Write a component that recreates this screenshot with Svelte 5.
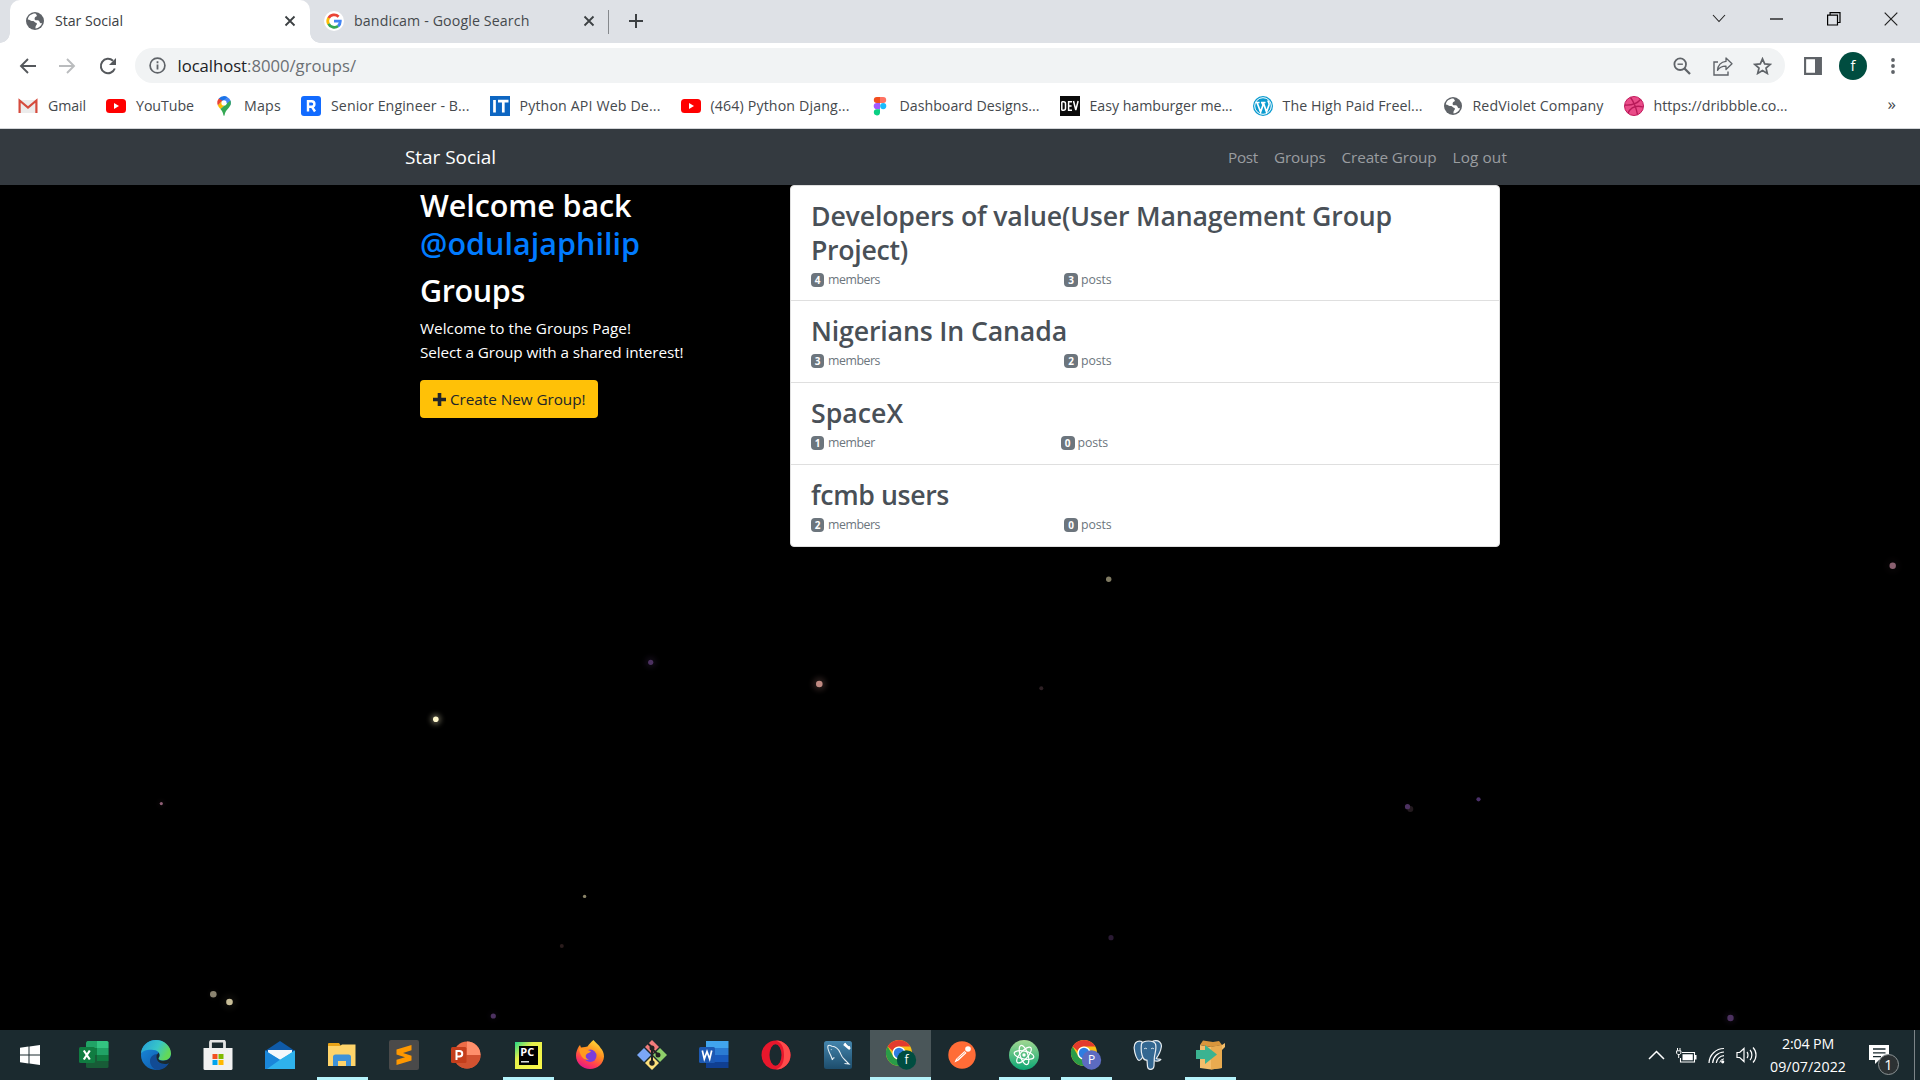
<script>
  // Spreads letter spacing so that a label fills its allotted width.
  function fit(node, width) {
    node.style.letterSpacing = '0px';
    const natural = node.getBoundingClientRect().width;
    const count = node.textContent.length;
    node.style.letterSpacing = `${(width - natural) / count}px`;
  }

  const svg = (w, h, vb, body) =>
    `<svg width="${w}" height="${h}" viewBox="${vb}" fill="none" style="display:block">${body}</svg>`;

  const globe = `<circle cx="10" cy="10" r="9" fill="#5f6368"/><path d="M10.5 2.6C7 2.4 3.6 4.6 2.8 8.4c2 .2 3.4 1.600 5.300 1.600 1.300 0 1.300 1.500 2.700 1.700 1.300.2 1.500 1.400.6 2.300-.8.8-1 1.900-.9 3.400 3-.2 5.700-2.400 6.600-5.200-1.200.3-2.200-.2-2.500-1.300-.4-1.400-1.600-1.600-3-1.600-1.700 0-2.300-1-1.900-2.400.3-1.100 1.600-.8 2.100-1.800.4-.9-.8-1.300-1.300-2.500z" fill="#fff"/>`;
  const youtube = `<rect y="3" width="20" height="14" rx="3.500" fill="#f00"/><path d="M8 7l5 3-5 3z" fill="#fff"/>`;
  const chrome = `<circle cx="14" cy="14" r="13" fill="#fbc116"/><path d="M2.700 7.500A13 13 0 0 1 25.300 7.500H14a6.500 6.500 0 0 0-6.200 4.500z" fill="#e33b2e"/><path d="M2.700 7.500A13 13 0 0 0 14 27l5.600-9.700a6.500 6.500 0 0 1-11.300 0z" fill="#2a9c48"/><circle cx="14" cy="14" r="6.600" fill="#fff"/><circle cx="14" cy="14" r="5.200" fill="#2f7de1"/>`;
  const letterBadge = (fill, ch) =>
    `<circle cx="21.500" cy="21" r="9.700" fill="${fill}"/><text x="21.500" y="25.300" font-family="Open Sans, sans-serif" font-size="12" fill="#fff" text-anchor="middle">${ch}</text>`;

  const icons = {
    globe: svg(20, 20, '0 0 20 20', globe),
    google: svg(20, 20, '0 0 20 20', `<circle cx="10" cy="10" r="10" fill="#fff"/><g stroke-width="2.800"><path d="M4.600 7.200A6.300 6.300 0 0 1 14.600 5.700" stroke="#ea4335"/><path d="M4.600 6.900a6.300 6.300 0 0 0 0 6.200" stroke="#fbbc05"/><path d="M4.600 12.800a6.300 6.300 0 0 0 9.600 2.200" stroke="#34a853"/><path d="M10 10.200h6.300c0 2-.7 3.700-2.200 4.900" stroke="#4285f4"/></g>`),
    close: svg(12, 12, '0 0 12 12', `<path d="M1.500 1.500l9 9m0-9l-9 9" stroke="#3c4043" stroke-width="1.800"/>`),
    plus: svg(14, 14, '0 0 14 14', `<path d="M7 0v14M0 7h14" stroke="#3c4043" stroke-width="2"/>`),
    chevron: svg(14, 9, '0 0 14 9', `<path d="M1 1l6 6.500L13 1" stroke="#222" stroke-width="1.100"/>`),
    minimize: svg(13, 2, '0 0 13 2', `<path d="M0 1h13" stroke="#000" stroke-width="1.200"/>`),
    restore: svg(14, 14, '0 0 14 14', `<path d="M.6 3.100h9.900v9.900H.6zM3.100 3V.6h9.900v9.900h-2.400" stroke="#000" stroke-width="1.200"/>`),
    winclose: svg(14, 14, '0 0 14 14', `<path d="M.7.7l12.600 12.600m0-12.600L.7 13.300" stroke="#222" stroke-width="1.200"/>`),
    back: svg(18, 18, '0 0 18 18', `<path d="M17 9H2m7-7L2 9l7 7" stroke="#55585c" stroke-width="1.900"/>`),
    forward: svg(18, 18, '0 0 18 18', `<path d="M1 9h15M9 2l7 7-7 7" stroke="#babcbe" stroke-width="1.900"/>`),
    reload: svg(20, 20, '0 0 20 20', `<path d="M16.800 12.500A7.200 7.200 0 1 1 15 4.800" stroke="#55585c" stroke-width="2"/><path d="M18 2v7h-7z" fill="#55585c"/>`),
    info: svg(17, 17, '0 0 17 17', `<circle cx="8.500" cy="8.500" r="7.400" stroke="#5f6368" stroke-width="1.700"/><path d="M8.500 7.600v5M8.500 4.300v1.900" stroke="#5f6368" stroke-width="1.800"/>`),
    zoom: svg(18, 18, '0 0 18 18', `<circle cx="7.200" cy="7.200" r="5.800" stroke="#5f6368" stroke-width="1.800"/><path d="M11.500 11.500l5.500 5.500" stroke="#5f6368" stroke-width="2.300"/><path d="M4.500 7.200h5.400" stroke="#5f6368" stroke-width="1.400"/>`),
    share: svg(20, 20, '0 0 20 20', `<path d="M5 6H1v13h14v-3.500" stroke="#5f6368" stroke-width="1.400"/><path d="M13 2l6 5.800-6 5.700V10.200c-4-.1-6.500 1-8.500 4.200.4-4.700 3.300-8.400 8.500-9z" stroke="#5f6368" stroke-width="1.300" stroke-linejoin="round"/>`),
    star: svg(19, 18, '0 0 19 18', `<path d="M9.500 1.800l2.200 5.100 5.500.5-4.200 3.600 1.300 5.400-4.800-2.900-4.800 2.900L6 11 1.800 7.400l5.500-.5z" stroke="#5f6368" stroke-width="1.700"/>`),
    panel: svg(18, 18, '0 0 18 18', `<path d="M1.100 1.100h15.800v15.800H1.100z" stroke="#5f6368" stroke-width="2.100"/><path d="M11 1h6v16h-6z" fill="#5f6368"/>`),
    kebab: svg(4, 16, '0 0 4 16', `<g fill="#5f6368"><circle cx="2" cy="2" r="1.900"/><circle cx="2" cy="8" r="1.900"/><circle cx="2" cy="14" r="1.900"/></g>`),
    gmail: svg(20, 20, '0 0 20 20', `<path d="M1 4h18v13H1z" fill="#ececec"/><path d="M1.600 17V4.500L10 11.500l8.400-7V17" stroke="#d54b3d" stroke-width="2.200"/>`),
    youtube: svg(20, 20, '0 0 20 20', youtube),
    maps: svg(20, 20, '0 0 20 20', `<path d="M10 0a6.700 6.700 0 0 0-5.200 2.500L8 7l5.600-5.800A7 7 0 0 0 10 0z" fill="#1a73e8"/><path d="M13.500 1.200a6.700 6.700 0 0 1 2.800 8L8.300 4.900z" fill="#4285f4"/><path d="M4.800 2.500a6.800 6.800 0 0 0-.9 7l4.600-4.700z" fill="#ea4335"/><path d="M3.900 9.500c.5 1.200 1.400 2.300 2.500 3.500L12 8.500 8 5z" fill="#fbbc04"/><path d="M6.400 13c1.900 2.200 2.600 4 3 5.900.2 1.200 1 1.200 1.200 0 1-5 4.300-5.900 5.900-9.900.5-1.700.4-3.200-.1-4.500z" fill="#34a853"/><circle cx="10" cy="6.900" r="2.600" fill="#fff"/>`),
    r: svg(20, 20, '0 0 20 20', `<rect width="20" height="20" rx="3" fill="#126bff"/><path d="M7 15.500V5.200h3.600a2.800 2.800 0 0 1 0 5.600H8m3 0l3 4.700" stroke="#fff" stroke-width="2.400"/>`),
    it: svg(20, 20, '0 0 20 20', `<path d="M0 0h20v20H0z" fill="#0d66c2"/><path d="M4.500 4v12.500M8 5.200h10.500M13.300 5v11.500" stroke="#fff" stroke-width="2.700"/>`),
    figma: svg(20, 20, '0 0 20 20', `<path d="M10 1H6.800a3 3 0 0 0 0 6H10z" fill="#f24e1e"/><path d="M10 1h3.200a3 3 0 0 1 0 6H10z" fill="#ff7262"/><path d="M10 7H6.800a3 3 0 0 0 0 6.200H10z" fill="#a259ff"/><circle cx="13.200" cy="10.100" r="3.100" fill="#1abcfe"/><path d="M10 13.200H6.800a3.100 3.100 0 1 0 3.200 3.200z" fill="#0acf83"/>`),
    dev: svg(20, 20, '0 0 20 20', `<path d="M0 0h20v20H0z" fill="#0a0a0a"/><path d="M1.800 5.500v9M2 5.700h1.500q2 0 2 2v4.600q0 2-2 2H2M12 5.700H8.600v8.600H12M8.600 10h3M13.500 5l2.300 9 2.300-9" stroke="#fff" stroke-width="1.500"/>`),
    wp: svg(20, 20, '0 0 20 20', `<circle cx="10" cy="10" r="10" fill="#0a9bd0"/><circle cx="10" cy="10" r="8.300" stroke="#fff" stroke-width="1"/><path d="M2.600 6.500h4M8 6.500h4.500M4 6.500l3.600 9.500L10 9 8.900 6.500M10.300 6.500l3.200 9.500 2.500-7c.6-2-.5-3-1.200-4.500" stroke="#fff" stroke-width="1.700"/>`),
    dribbble: svg(20, 20, '0 0 20 20', `<circle cx="10" cy="10" r="9.500" fill="#ea4c89" stroke="#c2185b"/><path d="M6.500 1.500C10 6 12 11 13.500 18.500M1 9c7 .3 12-1 15.500-5.500M4 17c3-6 8-8 15-6" stroke="#b71a58" stroke-width="1.300"/>`),
    fa: svg(13, 13, '0 0 13 13', `<path d="M4.700 0h3.600v4.700H13v3.600H8.300V13H4.700V8.300H0V4.700h4.700z" fill="#212529"/>`),

    windows: svg(20, 20, '0 0 20 20', `<path d="M0 2.800l8.500-1.200v8H0zM9.500 1.500L20 0v9.600H9.500zM0 10.500h8.500v8L0 17.300zM9.500 10.500H20V20L9.500 18.600z" fill="#fff"/>`),
    excel: svg(30, 28, '0 0 30 28', `<rect x="7" y="0" width="22.500" height="27" rx="1.500" fill="#185c37"/><path d="M8.500 0H18v7H7V1.500z" fill="#21a366"/><path d="M18 0h10q1.500 0 1.500 1.500V7H18z" fill="#33c481"/><path d="M7 7h11v7H7z" fill="#107c41"/><path d="M18 7h11.500v7H18z" fill="#21a366"/><path d="M18 14h11.500v6H18z" fill="#107c41"/><rect x="0" y="6" width="16" height="16" rx="1.500" fill="#107c41"/><path d="M4.800 9.500l6 9m0-9l-6 9" stroke="#fff" stroke-width="2.200"/>`),
    edge: svg(30, 30, '0 0 30 30', `<defs><linearGradient id="e1" x1="0" y1="0" x2="1" y2="0.400"><stop stop-color="#249bd9"/><stop offset=".6" stop-color="#37c6c8"/><stop offset="1" stop-color="#63d957"/></linearGradient><linearGradient id="e2" x1="0" y1="0" x2="1" y2="1"><stop stop-color="#1a8ee0"/><stop offset="1" stop-color="#0c4fa0"/></linearGradient></defs><circle cx="15" cy="15" r="15" fill="url(#e2)"/><path d="M0 14C0 6 7 0 15 0s15 6 15 13.500c0 4.500-3.500 7-7.500 7-4 0-6-1.500-4.700-3 2-2.500.6-7-5.300-7.500C7 9.500 2 10 0 14z" fill="url(#e1)"/><path d="M28 23c-5 2.500-12 1-12.500-5-.2-2 .7-3.200 1.500-4-4-.5-8 2.500-8 7 0 4 3 8 7 9 5 0 9.500-2.500 12-7z" fill="#124b94"/><path d="M30 15c-.5 4-4 5.700-7.500 5.700-4 0-6-1.500-4.700-3.200 1-1.300 1-3-.3-5l-2 3c-.8 5 3 8.500 8.500 8.500 2 0 3-.4 4.200-1 1.300-2.300 1.800-5 1.800-8z" fill="#1b2a2f"/>`),
    store: svg(30, 30, '0 0 30 30', `<path d="M7.500 9V2.500q0-1.500 1.500-1.500h11q1.500 0 1.500 1.500V9" stroke="#e4e4e4" stroke-width="2.800"/><path d="M.5 8h29v20.500q0 1.500-1.500 1.500H2q-1.500 0-1.500-1.500z" fill="#f1f1f1"/><path d="M9.500 14h5v5h-5z" fill="#f25022"/><path d="M15.500 14h5v5h-5z" fill="#7fba00"/><path d="M9.500 20h5v5h-5z" fill="#00a4ef"/><path d="M15.500 20h5v5h-5z" fill="#ffb900"/>`),
    mail: svg(30, 30, '0 0 30 30', `<path d="M0 11L15 1l15 10v3H0z" fill="#0f5aa8"/><path d="M3 10h24v10H3z" fill="#f4f8fb"/><path d="M0 10.500l15 9.500 15-9.500V29H0z" fill="#35bdf2"/><path d="M0 10.500L30 29H0z" fill="#1a86d9"/><path d="M15 19.800l15-9.300V29H2z" fill="#2fb2ec"/>`),
    explorer: svg(30, 26, '0 0 30 26', `<path d="M1 1.500Q1 1 2 1h10l2 3H1z" fill="#e8a317"/><path d="M1 4h12l2-1.500h13.500V24H1z" fill="#ffd46a"/><path d="M6 24v-9q0-2.500 2.500-2.500h13Q24 12.500 24 15v9h-5v-5h-8v5z" fill="#3f92d8"/>`),
    sublime: svg(30, 30, '0 0 30 30', `<rect width="30" height="30" rx="2" fill="#4a4a4a"/><path d="M22.500 5v5.200L14 13l8.500 2.700v4.800L7.500 25v-5.200l8.500-2.600-8.500-2.700V9.500z" fill="#ff9800"/>`),
    ppt: svg(30, 28, '0 0 30 28', `<circle cx="16" cy="14" r="13.500" fill="#ed6c47"/><path d="M16 .5A13.500 13.500 0 0 1 29.500 14H16z" fill="#ff8f6b"/><path d="M2.500 14h27a13.500 13.500 0 0 1-27 0z" fill="#d35230"/><rect y="6" width="15.500" height="16" rx="1.500" fill="#c43e1c"/><path d="M5.500 19v-9h3a2.700 2.700 0 0 1 0 5.500h-3" stroke="#fff" stroke-width="2"/>`),
    pycharm: svg(27, 27, '0 0 27 27', `<defs><linearGradient id="p1" x1="0" y1="0" x2="1" y2="1"><stop stop-color="#21d789"/><stop offset=".35" stop-color="#e6f04a"/><stop offset="1" stop-color="#fcf84a"/></linearGradient></defs><path d="M0 0h27v27H0z" fill="url(#p1)"/><path d="M4 4h19v19H4z" fill="#000"/><path d="M6 19.800h8" stroke="#fff" stroke-width="1.300"/><text x="5.200" y="14.300" font-family="Open Sans, sans-serif" font-size="11" font-weight="700" fill="#fff" textLength="14">PC</text>`),
    firefox: svg(30, 30, '0 0 30 30', `<defs><linearGradient id="f1" x1=".8" y1="0" x2=".3" y2="1"><stop stop-color="#ffe23a"/><stop offset=".45" stop-color="#ff8a1f"/><stop offset=".75" stop-color="#ff3d52"/><stop offset="1" stop-color="#e3158b"/></linearGradient></defs><path d="M18.500 0c1.500 2.500 5.500 4.500 7.300 8.200C27.500 10 29 13 29 16.500 28.500 24 22.500 29 15 29S1 23.500 1 15.800C1 12 2.300 9 3.800 6.500L5 5l1 2.500L10 7l2.500-.5C14 4 16 2.200 18.500 0z" fill="url(#f1)"/><circle cx="15.300" cy="15.800" r="6.200" fill="#7b3ddb"/><path d="M4 9c3-2 6-1 7.500.5l4.500 1.700c-1 2-3.500 1.500-4.700 3.300C10 16 11 19 14 19.500 9 21 5 16 4 9z" fill="#ff9a1f"/>`),
    git: svg(30, 30, '0 0 30 30', `<path d="M15 0l7 7-7 7-7-7z" fill="#f27c7c"/><path d="M7 8l7 7-7 7-7-7z" fill="#7ba7f7"/><path d="M23 8l7 7-7 7-7-7z" fill="#8ecf6a"/><path d="M15 16l7 7-7 7-7-7z" fill="#ffe07a"/><path d="M11 3.500l4 4V23M15 9l6 5.500" stroke="#222" stroke-width="2"/><g fill="#222"><circle cx="15" cy="8" r="2.500"/><circle cx="21" cy="15" r="2.500"/><circle cx="15" cy="23" r="2.700"/></g>`),
    word: svg(30, 28, '0 0 30 28', `<path d="M7 0h22.500v7H7z" fill="#41a5ee"/><path d="M7 7h22.500v7H7z" fill="#2b7cd3"/><path d="M7 14h22.500v7H7z" fill="#185abd"/><path d="M7 21h22.500v6H7z" fill="#103f91"/><rect y="6" width="16" height="16" rx="1.500" fill="#1d59b3"/><path d="M3.300 9.500l2 8.500L8 10.500l2.700 7.500 2-8.500" stroke="#fff" stroke-width="1.700"/>`),
    opera: svg(30, 30, '0 0 30 30', `<circle cx="15" cy="15" r="14.500" fill="#e8172c"/><path d="M15 .5a14.500 14.500 0 0 1 0 29C22 27 23 20 23 15S22 3 15 .5z" fill="#ff4b4b"/><ellipse cx="14.500" cy="15" rx="6" ry="10.700" fill="#1b2a2f"/>`),
    mysql: svg(28, 28, '0 0 28 28', `<defs><linearGradient id="m1" x1="0" y1="0" x2="0" y2="1"><stop stop-color="#4485ad"/><stop offset="1" stop-color="#1d4d6c"/></linearGradient></defs><rect width="28" height="28" rx="2.500" fill="url(#m1)"/><path d="M8.500 19l-1.700-4.500C5 11 3 7.500 4 4.800 5 3.500 6.500 4.500 8 5.200c3.500.3 6.500 2.800 8 6.300 1.200 2.800 2 5.200 4.500 7l4.500 4.500-4.500-.5M8.500 19c.3-2 1-2.500 2-2M7 8.300l.5.500" stroke="#e6eff4" stroke-width="1.100"/><path d="M20 3l6 5" stroke="#fff" stroke-width="2.600"/><path d="M21 2l1.500 3M26 5.500l-2.500 1" stroke="#fff" stroke-width="1.200"/>`),
    chromeF: svg(32, 32, '0 0 32 32', chrome + letterBadge('#004d40', 'f')),
    postman: svg(28, 28, '0 0 28 28', `<circle cx="14" cy="14" r="13.700" fill="#ff6c37"/><path d="M6.500 21.500L8 18l8.500-8 2 2-8 7.500z" fill="#fff"/><circle cx="20" cy="8" r="2.800" fill="#fff"/><path d="M9 18.500l8-7" stroke="#ff6c37" stroke-width=".7"/>`),
    atom: svg(30, 30, '0 0 30 30', `<defs><linearGradient id="a1" x1="0" y1="0" x2="0" y2="1"><stop stop-color="#a2d892"/><stop offset="1" stop-color="#0ba673"/></linearGradient></defs><circle cx="15" cy="15" r="15" fill="url(#a1)"/><g stroke="#fff" stroke-width="1.200"><ellipse cx="15" cy="15" rx="10" ry="3.900" transform="rotate(12 15 15)"/><ellipse cx="15" cy="15" rx="10" ry="3.900" transform="rotate(72 15 15)"/><ellipse cx="15" cy="15" rx="10" ry="3.900" transform="rotate(132 15 15)"/></g><circle cx="15" cy="15" r="1.700" fill="#fff"/>`),
    chromeP: svg(32, 32, '0 0 32 32', chrome + letterBadge('#5c6bc0', 'P')),
    pg: svg(30, 30, '0 0 30 30', `<g fill="#336791" stroke="#e8eef2" stroke-width="1.200" stroke-linejoin="round"><path d="M9 1.500C3 0 .8 4 1.200 8.500 1.700 14 4 20 6 20.500c2 .2 3-2.500 4-4z"/><path d="M20 1c6-1.500 9 2 8.300 6-.7 5-3.300 9-5 11.500 1.700 1 4 .5 4.500 1-1.800 1.800-5 2-6.500 1z"/><path d="M8.500 4c2-4 12-4 14 0 1.500 5-1 10-1.200 14l-.3 8c-.5 4.500-6 4.500-6.500.5L14 20c-5 1-6.500-9-5.500-16z"/></g><path d="M11 9c1-1 2-1 3 0M18 9c1-1 2-1 3 0" stroke="#e8eef2"/>`),
    box: svg(30, 30, '0 0 30 30', `<path d="M5 5l11 2 11-2v23l-11 1.500L5 28z" fill="#f3bd6a"/><path d="M16 7l11-2v23l-11 1.500z" fill="#e9ab50"/><path d="M5 5l3-4.500L18 2l-2 5zM27 5l-3-4-6 1-2 5z" fill="#d9963c"/><path d="M27 5l3-2v4l-3 3z" fill="#f3bd6a"/><path d="M1 10h9V5l12 9.500L10 24v-5H1z" fill="#3bb391"/>`),

    up: svg(17, 10, '0 0 17 10', `<path d="M1 9l7.500-7.500L16 9" stroke="#fff" stroke-width="1.500"/>`),
    battery: svg(21, 15, '0 0 21 15', `<path d="M6 4.500h12.500V14h-14V10" stroke="#fff" stroke-width="1.100"/><path d="M6.500 6.200h10.300v6.100H6.500zM19 7h1.500v4.500H19z" fill="#fff"/><path d="M1.500 0v2.500M4 0v2.500M.6 2.800h4.300v2.400L3.700 6.500H1.800L.6 5.200zM2.700 6.500V10" stroke="#fff" stroke-width="1"/>`),
    wifi: svg(17, 17, '0 0 17 17', `<g stroke="#fff" stroke-width="1.200"><path d="M1 16A15 15 0 0 1 16 1.500M4.700 16A11.500 11.500 0 0 1 16 5M8.300 16A8 8 0 0 1 16 8.700"/></g><path d="M11.700 15.500A5 5 0 0 1 16 11.800" stroke="#fff" stroke-width="1"/><circle cx="14.700" cy="14.800" r="1.600" fill="#fff"/>`),
    sound: svg(21, 18, '0 0 21 18', `<path d="M1 6.500h2.700L8 2.500v13l-4.300-4H1zM11 6c1.300 1.500 1.300 4.500 0 6M14 4c2.500 2.500 2.500 7.500 0 10M17 1.500c4 4 4 11 0 15" stroke="#fff" stroke-width="1.200"/>`),
    note: svg(32, 32, '0 0 32 32', `<path d="M1 2h20v15H11l-4 4v-4H1z" fill="#fff"/><path d="M5 6h12.500M5 9.800h12.500M5 13.600h8" stroke="#1b2a2f" stroke-width="1.300"/><circle cx="20.500" cy="21.500" r="10" fill="#2c3133" stroke="#8c9395" stroke-width="1"/><text x="20.500" y="26.500" font-family="Open Sans, sans-serif" font-size="14.500" fill="#fff" text-anchor="middle">1</text>`)
  };

  const bookmarks = [
    ['gmail', 'Gmail', 38], ['youtube', 'YouTube', 58], ['maps', 'Maps', 37],
    ['r', 'Senior Engineer - B...', 138.5], ['it', 'Python API Web De...', 141],
    ['youtube', '(464) Python Djang...', 139], ['figma', 'Dashboard Designs...', 140],
    ['dev', 'Easy hamburger me...', 143], ['wp', 'The High Paid Freel...', 140],
    ['globe', 'RedViolet Company', 131], ['dribbble', 'https://dribbble.co...', 134]
  ];

  const links = [['Post', 30], ['Groups', 51.500], ['Create Group', 95], ['Log out', 54.500]];

  const groups = [
    { lines: [['Developers of value(User Management Group', 581], ['Project)', 97]], members: 4, posts: 3 },
    { lines: [['Nigerians In Canada', 256]], members: 3, posts: 2 },
    { lines: [['SpaceX', 92]], members: 1, posts: 0 },
    { lines: [['fcmb users', 138]], members: 2, posts: 0 }
  ];

  // x, y, radius, colour, halo radius, halo opacity
  const stars = [
    [650.7, 662.3, 2.6, '#4c3160', 6, 0.2], [435.8, 719.3, 2.8, '#fff8cc', 5.5, 0.3], [161.3, 803.6, 1.6, '#8f5f75', 3, 0.1],
    [584.6, 896.4, 1.7, '#8a8468', 0, 0], [561.8, 946, 2, '#2a1c1c', 0, 0], [213.3, 994.3, 3.3, '#8a8370', 4, 0.08],
    [229.5, 1002, 3.3, '#c8be98', 8, 0.05], [493.3, 1016, 2.6, '#4c3160', 5, 0.08], [1108.7, 579.3, 2.7, '#7f7a62', 0, 0],
    [819.3, 684, 3.3, '#c08a82', 7, 0.18], [1041.3, 688.2, 2, '#2e2024', 0, 0], [1111, 937.7, 2.6, '#2a1a33', 0, 0],
    [1892.7, 565.8, 3.2, '#8a6070', 8, 0.04], [1410.3, 809, 3, '#231a1e', 0, 0], [1407.5, 806.7, 2.6, '#4c3160', 4, 0.05],
    [1478.5, 799.3, 2.1, '#4a3068', 0, 0], [1730.5, 1018, 3.2, '#4c3160', 6, 0.16]
  ];

  const apps = [
    ['excel', ''], ['edge', ''], ['store', ''], ['mail', ''], ['explorer', 'open'], ['sublime', ''], ['ppt', ''],
    ['pycharm', 'open'], ['firefox', ''], ['git', ''], ['word', ''], ['opera', ''], ['mysql', ''],
    ['chromeF', 'active'], ['postman', ''], ['atom', 'open'], ['chromeP', 'open'], ['pg', ''], ['box', 'open']
  ];
</script>

<div class="screen">
  <div class="tabstrip">
    <div class="tab active">
      {@html icons.globe}
      <span class="label" use:fit={68}>Star Social</span>
      <span class="push">{@html icons.close}</span>
    </div>
    <div class="tab second">
      {@html icons.google}
      <span class="label" use:fit={175.500}>bandicam - Google Search</span>
      <span class="push">{@html icons.close}</span>
    </div>
    <span class="divider"></span>
    <span class="newtab">{@html icons.plus}</span>
    <div class="winbtns">
      <span>{@html icons.chevron}</span>
      <span>{@html icons.minimize}</span>
      <span>{@html icons.restore}</span>
      <span>{@html icons.winclose}</span>
    </div>
  </div>

  <div class="toolbar">
    <div class="nav">{@html icons.back}{@html icons.forward}{@html icons.reload}</div>
    <div class="omnibox">
      {@html icons.info}
      <span class="url"><span class="host" use:fit={69.500}>localhost</span><span use:fit={109}>:8000/groups/</span></span>
      <div class="omniactions">{@html icons.zoom}{@html icons.share}{@html icons.star}</div>
    </div>
    <span class="sidepanel">{@html icons.panel}</span>
    <span class="avatar">f</span>
    <span class="kebab">{@html icons.kebab}</span>
  </div>

  <div class="bookmarks">
    {#each bookmarks as [icon, label, width]}
      <div class="bookmark">{@html icons[icon]}<span class="name" use:fit={width}>{label}</span></div>
    {/each}
    <span class="more">»</span>
  </div>

  <nav class="navbar">
    <span class="brand" use:fit={91}>Star Social</span>
    <div class="links">
      {#each links as [label, width]}<span use:fit={width}>{label}</span>{/each}
    </div>
  </nav>

  <main class="page">
    <section class="intro">
      <h2><span use:fit={211.500}>Welcome back</span><br /><span class="user" use:fit={220}>@odulajaphilip</span></h2>
      <h2><span use:fit={105}>Groups</span></h2>
      <p><span use:fit={211}>Welcome to the Groups Page!</span><br /><span use:fit={263.500}>Select a Group with a shared interest!</span></p>
      <span class="create">{@html icons.fa}<span use:fit={135.500}>Create New Group!</span></span>
    </section>

    <section class="list">
      {#each groups as g}
        <article class="item">
          <h3>{#each g.lines as [text, width]}<div><span use:fit={width}>{text}</span></div>{/each}</h3>
          <div class="meta">
            <span class="badge">{g.members}</span>
            {#if g.members === 1}
              <span class="word single" use:fit={47}>member</span>
            {:else}
              <span class="word" use:fit={52}>members</span>
            {/if}
            <span class="badge posts">{g.posts}</span>
            <span class="word" use:fit={30.500}>posts</span>
          </div>
        </article>
      {/each}
    </section>
  </main>

  <svg class="stars" width="1920" height="1030" viewBox="0 0 1920 1030">
    <defs><filter id="glow" x="-4" y="-4" width="9" height="9"><feGaussianBlur stdDeviation="2.500" /></filter></defs>
    {#each stars as [x, y, r, color, halo, strength]}
      {#if halo}<circle cx={x} cy={y} r={halo} fill={color} opacity={strength} filter="url(#glow)" />{/if}
      <circle cx={x} cy={y} {r} fill={color} />
    {/each}
  </svg>

  <footer class="taskbar">
    <span class="start">{@html icons.windows}</span>
    {#each apps as [name, state]}
      <span class="app {state}">{@html icons[name]}</span>
    {/each}
    <div class="tray">
      {@html icons.up}{@html icons.battery}{@html icons.wifi}{@html icons.sound}
    </div>
    <div class="clock"><div><span use:fit={52}>2:04 PM</span></div><div><span use:fit={76}>09/07/2022</span></div></div>
    <span class="note">{@html icons.note}</span>
    <span class="peek"></span>
  </footer>
</div>

<style>
  :global(body) { margin: 0; background: #000; overflow: hidden; }
  .screen {
    position: relative; width: 1920px; height: 1080px; display: flex; flex-direction: column;
    background: #000; font-family: "Open Sans", "Noto Sans", sans-serif; white-space: nowrap; overflow: hidden;
  }
  .screen * { box-sizing: border-box; }

  .tabstrip { height: 43px; flex: none; background: #dee1e6; display: flex; padding-left: 10px; align-items: stretch; }
  .tab { display: flex; align-items: center; font-size: 14.200px; color: #45494d; }
  .tab.active { position: relative; width: 300px; background: #fff; border-radius: 10px 10px 0 0; padding: 0 14px 1px 15px; color: #3c4043; }
  .tab.active::before, .tab.active::after { content: ""; position: absolute; bottom: 0; width: 10px; height: 10px; }
  .tab.active::before { left: -10px; background: radial-gradient(circle at 0 0, transparent 9.500px, #fff 10px); }
  .tab.active::after { right: -10px; background: radial-gradient(circle at 100% 0, transparent 9.500px, #fff 10px); }
  .tab.second { width: 298px; padding: 0 13px 1px 14px; }
  .label { margin-left: 10px; padding-bottom: 2px; }
  .push { margin-left: auto; }
  .divider { width: 1px; height: 24px; margin-top: 10px; background: #85888c; }
  .newtab { margin: 14px 0 0 20px; }
  .winbtns { margin-left: auto; display: flex; height: 37px; }
  .winbtns span { width: 57.300px; display: flex; align-items: center; justify-content: center; }

  .toolbar { height: 45px; flex: none; background: #fff; display: flex; align-items: center; }
  .nav { display: flex; align-items: center; gap: 21.500px; width: 135px; padding-left: 18.500px; }
  .omnibox { width: 1650px; height: 35px; border-radius: 18px; background: #f1f3f4; display: flex; align-items: center; padding: 0 13px 0 14px; }
  .url { font-size: 16.700px; margin-left: 11.500px; color: #6b6f73; }
  .host { color: #202124; }
  .omniactions { margin-left: auto; display: flex; align-items: center; gap: 21px; }
  .omniactions :global(svg:nth-child(2)) { margin: 0 -.5px 0 .5px; }
  .sidepanel { margin-left: 18.500px; }
  .avatar { margin-left: 17.500px; width: 28px; height: 28px; border-radius: 50%; background: #004d40; color: #fff; font-size: 14.500px; line-height: 27px; text-align: center; }
  .kebab { margin-left: 24px; }

  .bookmarks { height: 41px; flex: none; background: #fff; border-bottom: 1px solid #d3d5d8; display: flex; align-items: center; padding: 0 24px 4px 18px; gap: 20px; font-size: 14.200px; color: #45494d; }
  .bookmark { display: flex; align-items: center; gap: 10px; }
  .name { padding-bottom: 2px; }
  .more { margin-left: auto; font-size: 17px; line-height: 20px; padding-bottom: 5px; }

  .navbar { height: 56px; flex: none; background: #343a40; display: flex; align-items: center; justify-content: space-between; padding: 0 413px 0 405px; }
  .brand { font-size: 19px; color: #fff; }
  .links { display: flex; gap: 16px; font-size: 15.300px; color: #9a9da0; }

  .page { display: grid; grid-template-columns: 370px 710px; padding-left: 420px; flex: 1; align-items: start; color: #fff; }
  .intro { padding-top: 1px; }
  h2 { margin: 0 0 8px; font-size: 30.500px; font-weight: 600; line-height: 38.400px; }
  .user { color: #007bff; }
  p { margin: -1px 0 16px; font-size: 15.300px; line-height: 24px; }
  .create { display: inline-flex; align-items: center; width: 178px; height: 38px; padding-left: 13px; gap: 4px; background: #ffc107; border-radius: 4px; color: #212529; font-size: 15.300px; }
  .list { background: #fff; border: 1px solid #dfdfdf; border-radius: 4px; }
  .item { padding: 13px 20px 11px; border-bottom: 1px solid #dfdfdf; }
  .item:first-child { padding-bottom: 10px; }
  .item:last-child { border-bottom: 0; }
  h3 { margin: 0; font-size: 26.700px; font-weight: 600; line-height: 33.600px; color: #495057; }
  .meta { height: 23.400px; display: flex; align-items: center; color: #6c757d; font-size: 12.300px; padding-top: 2.500px; }
  .badge { width: 13px; height: 14px; border-radius: 4px; background: #6c757d; color: #fff; font-size: 10px; font-weight: 700; line-height: 14px; text-align: center; margin: 2px 4px 0 0; }
  .posts { margin-left: 184px; margin-right: 3px; width: 14px; }
  .single + .posts { margin-left: 185.500px; }

  .stars { position: absolute; left: 0; top: 0; pointer-events: none; }

  .taskbar { height: 50px; flex: none; background: #1b2a2f; display: flex; }
  .start { width: 63px; padding: 15px 0 0 20px; }
  .app { width: 62px; display: flex; align-items: center; justify-content: center; position: relative; }
  .app.active { background: #4a5659; margin-left: 1px; width: 61px; }
  .app.open::after, .app.active::after { content: ""; position: absolute; bottom: 0; height: 3px; left: 6px; width: 51px; background: #b5f3fb; }
  .app.active::after { left: 0; width: 61px; }
  .tray { margin-left: auto; display: flex; align-items: center; gap: 11px; }
  .clock { margin-left: 13px; width: 76px; color: #fff; font-size: 14.200px; line-height: 23px; text-align: center; padding-top: 2px; }
  .note { margin: 13px 0 0 22px; width: 32px; }
  .peek { margin-left: 14px; width: 6px; border-left: 1px solid #7d8588; }
</style>
